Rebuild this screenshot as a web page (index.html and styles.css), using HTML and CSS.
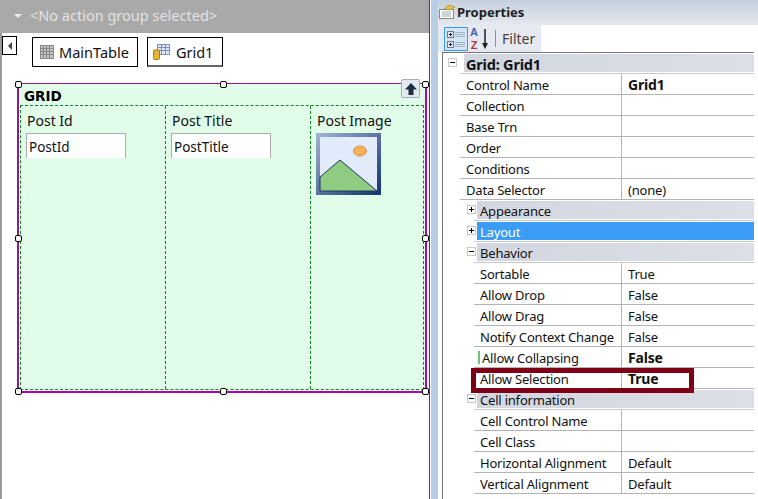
FILE: index.html
```html
<!DOCTYPE html>
<html lang="en">
<head>
    <meta charset="UTF-8">
    <title>Grid1 Properties</title>
    <link rel="stylesheet" href="styles.css">
</head>
<body>
    <!-- Designer -->
    <div class="designer">
        <div class="action-bar"><span class="caret"></span>&lt;No action group selected&gt;</div>
        <div class="crumbs">
            <div class="collapse-btn"><span class="collapse-arrow"></span></div>
            <div class="crumb">
                <svg class="crumb-icon" width="14" height="14" viewBox="0 0 14 14">
                    <rect x="0.5" y="0.5" width="13" height="13" fill="#c4c4c4" stroke="#888"/>
                    <path d="M3.500 0v14M6.500 0v14M9.500 0v14M0 3.500h14M0 6.500h14M0 9.500h14" stroke="#888" fill="none"/>
                </svg>
                MainTable
            </div>
            <div class="crumb crumb-active">
                <svg class="crumb-icon" width="17" height="16" viewBox="0 0 17 16">
                    <rect x="4.500" y="0.500" width="12" height="10" fill="#dfe6f5" stroke="#7f8fb5"/>
                    <path d="M4.500 3.500h12M4.500 6.500h12M8.500 0v10M12.500 0v10" stroke="#7f8fb5" fill="none"/>
                    <rect x="0.500" y="6" width="6" height="9.500" rx="1" fill="#e3b52f" stroke="#a9801a"/>
                </svg>
                Grid1
            </div>
        </div>

        <div class="grid-box">
            <span class="handle h-tl"></span><span class="handle h-tc"></span><span class="handle h-tr"></span>
            <span class="handle h-ml"></span><span class="handle h-mr"></span>
            <span class="handle h-bl"></span><span class="handle h-bc"></span><span class="handle h-br"></span>
            <div class="up-btn">
                <svg width="14" height="14" viewBox="0 0 14 14"><path d="M7 1l6 6.500H9.500V13h-5V7.500H1z" fill="#1d2f45"/></svg>
            </div>
            <div class="grid-title">GRID</div>
            <div class="grid-cols">
                <div class="grid-col col-id">
                    <div class="col-label">Post Id</div>
                    <div class="col-input">PostId</div>
                </div>
                <div class="grid-col col-title">
                    <div class="col-label">Post Title</div>
                    <div class="col-input">PostTitle</div>
                </div>
                <div class="grid-col col-image">
                    <div class="col-label">Post Image</div>
                    <svg class="image-icon" width="65" height="62" viewBox="0 0 65 62">
                        <defs>
                            <linearGradient id="frame" x1="0" y1="0" x2="1" y2="1">
                                <stop offset="0" stop-color="#a5b4d0"/>
                                <stop offset="1" stop-color="#12326f"/>
                            </linearGradient>
                        </defs>
                        <rect width="65" height="62" fill="url(#frame)"/>
                        <rect x="4" y="4" width="57" height="54" fill="#e2ebfb"/>
                        <path d="M4 44L24 27 61 58H4z" fill="#90cb82" stroke="#1c3562" stroke-width="1"/>
                        <ellipse cx="44" cy="18" rx="6.500" ry="5" fill="#f6b05e" stroke="#e58a3a"/>
                    </svg>
                </div>
            </div>
        </div>
    </div>

    <div class="splitter"></div>

    <!-- Properties -->
    <div class="properties">
        <div class="props-title">
            <svg width="18" height="16" viewBox="0 0 18 16">
                <rect x="1.500" y="5.500" width="14" height="9" fill="#fff" stroke="#8a8a8a"/>
                <path d="M4 8h9M4 10h9M4 12h9" stroke="#9aa"/>
                <path d="M6 5l5-4 6 2-5 3z" fill="#e6c24a" stroke="#98842d" stroke-width="0.600"/>
            </svg>
            Properties
        </div>
        <div class="props-toolbar">
            <div class="tool tool-on">
                <svg width="22" height="22" viewBox="0 0 22 22">
                    <rect x="2.500" y="3.500" width="6" height="6" fill="#dfe6ef" stroke="#778"/>
                    <rect x="2.500" y="13.500" width="6" height="6" fill="#dfe6ef" stroke="#778"/>
                    <path d="M4 6.500h3M5.500 5v3M4 16.500h3M5.500 15v3" stroke="#123"/>
                    <path d="M10 4.500h10M10 6.500h10M10 8.500h10M10 14.500h10M10 16.500h10M10 18.500h10" stroke="#a9b2bf"/>
                </svg>
            </div>
            <div class="tool-az">
                <span class="az-a">A</span>
                <span class="az-z">Z</span>
            </div>
            <svg class="sort-arrow" width="8" height="22" viewBox="0 0 8 22">
                <path d="M4 1v17" stroke="#222" stroke-width="1.500"/>
                <path d="M1 15l3 6 3-6z" fill="#222"/>
            </svg>
            <div class="tool-sep"></div>
            <div class="tool-filter">Filter</div>
        </div>
        <div class="props-body">
            <div class="group group-top"><span class="tree-box tree-minus"></span><div class="group-head group-bold">Grid: Grid1</div></div>
            <div class="row row-top"><div class="name">Control Name</div><div class="value strong">Grid1</div></div>
            <div class="row row-top"><div class="name">Collection</div><div class="value"></div></div>
            <div class="row row-top"><div class="name">Base Trn</div><div class="value"></div></div>
            <div class="row row-top"><div class="name">Order</div><div class="value"></div></div>
            <div class="row row-top"><div class="name">Conditions</div><div class="value"></div></div>
            <div class="row row-top"><div class="name">Data Selector</div><div class="value">(none)</div></div>
            <div class="group"><span class="tree-box tree-plus"></span><div class="group-head">Appearance</div></div>
            <div class="group"><span class="tree-box tree-plus"></span><div class="group-head group-selected">Layout</div></div>
            <div class="group"><span class="tree-box tree-minus"></span><div class="group-head">Behavior</div></div>
            <div class="row"><div class="name">Sortable</div><div class="value">True</div></div>
            <div class="row"><div class="name">Allow Drop</div><div class="value">False</div></div>
            <div class="row"><div class="name">Allow Drag</div><div class="value">False</div></div>
            <div class="row"><div class="name">Notify Context Change</div><div class="value">False</div></div>
            <div class="row"><div class="name name-changed">Allow Collapsing</div><div class="value strong">False</div></div>
            <div class="row"><div class="name">Allow Selection</div><div class="value strong">True</div></div>
            <div class="group"><span class="tree-box tree-minus"></span><div class="group-head">Cell information</div></div>
            <div class="row"><div class="name">Cell Control Name</div><div class="value"></div></div>
            <div class="row"><div class="name">Cell Class</div><div class="value"></div></div>
            <div class="row"><div class="name">Horizontal Alignment</div><div class="value">Default</div></div>
            <div class="row"><div class="name">Vertical Alignment</div><div class="value">Default</div></div>
            <div class="callout"></div>
        </div>
    </div>
</body>
</html>
```

FILE: styles.css
```css
body {
    margin: 0;
    width: 758px;
    height: 499px;
    overflow: hidden;
    display: flex;
    background: #fff;
    color: #111;
    font-family: 'Noto Sans', 'Open Sans', sans-serif;
    font-size: 13px;
    letter-spacing: -0.2px;
}

/* Designer */
.designer {
    width: 429px;
    flex: none;
    box-sizing: border-box;
    border-left: 2px solid #999;
    background: #fff;
    letter-spacing: 0;
    font-size: 14px;
}

.action-bar {
    height: 33px;
    margin-left: -2px;
    padding: 0 0 3px 14px;
    box-sizing: border-box;
    display: flex;
    align-items: center;
    background: #a9a9a9;
    color: #e2e2e2;
    font-size: 14.5px;
}

.caret {
    width: 0;
    height: 0;
    margin: 2px 8px 0 0;
    border: 4px solid transparent;
    border-top: 4px solid #eee;
    border-bottom: 0;
}

.crumbs {
    height: 39px;
    padding-top: 3px;
    box-sizing: border-box;
    display: flex;
    align-items: flex-start;
}

.collapse-btn {
    width: 13px;
    height: 17px;
    margin-right: 15px;
    border: 1px solid #000;
    display: flex;
    align-items: center;
    justify-content: center;
}

.collapse-arrow {
    width: 0;
    height: 0;
    border: 4px solid transparent;
    border-right: 4px solid #444;
    border-left: 0;
}

.crumb {
    height: 30px;
    margin: 1px 9px 0 0;
    padding: 0 8px 0 7px;
    box-sizing: border-box;
    display: flex;
    align-items: center;
    gap: 5px;
    border: 1px solid #000;
    background: #fff;
    font-size: 14.5px;
}

.crumb-active {
    border-bottom: 2px solid #666;
    padding: 0 9px 0 5px;
    gap: 6px;
}

.grid-box {
    position: relative;
    width: 410px;
    height: 310px;
    margin: 11px 0 0 15px;
    box-sizing: border-box;
    border-style: solid;
    border-width: 1px 2px 2px 2px;
    border-color: #8d1a8d #b000b0 #b000b0 #8d1a8d;
    background: #e1fde9;
}

.handle {
    position: absolute;
    width: 5px;
    height: 5px;
    border: 1px solid #000;
    border-radius: 2px;
    background: #fff;
    z-index: 1;
}

.h-tl { left: -4px; top: -3px; }
.h-tc { left: 201px; top: -3px; }
.h-tr { left: 403px; top: -3px; }
.h-ml { left: -4px; top: 151px; }
.h-mr { left: 403px; top: 151px; }
.h-bl { left: -4px; top: 304px; }
.h-bc { left: 201px; top: 304px; }
.h-br { left: 403px; top: 304px; }

.up-btn {
    position: absolute;
    right: 5px;
    top: -5px;
    width: 17px;
    height: 17px;
    display: flex;
    align-items: center;
    justify-content: center;
    border: 1px solid #9fb0c6;
    border-radius: 2px;
    background: #e4e9f0;
}

.grid-title {
    height: 21px;
    padding-left: 5px;
    box-sizing: border-box;
    font-family: 'DejaVu Sans', sans-serif;
    font-size: 13.5px;
    font-weight: bold;
    line-height: 24px;
    color: #000;
}

.grid-cols {
    display: flex;
    height: 285px;
    margin: 0 1px;
    box-sizing: border-box;
    border: 1px dashed #0a8a1a;
}

.grid-col {
    box-sizing: border-box;
    padding: 4px 0 0 6px;
    border-right: 1px dashed #0a8a1a;
}

.col-id, .col-title {
    width: 145px;
}

.col-image {
    flex: 1;
    border-right: 0;
}

.col-label {
    height: 23px;
    line-height: 21px;
}

.col-input {
    width: 100px;
    height: 25px;
    margin-left: -1px;
    box-sizing: border-box;
    padding-left: 2px;
    border: 1px solid #aaa;
    border-bottom: 0;
    background: #fff;
    font-size: 13.5px;
    line-height: 26px;
}

.image-icon {
    display: block;
    margin-left: -1px;
}

.splitter {
    width: 9px;
    flex: none;
    box-sizing: border-box;
    border-left: 1px solid #444;
    background: linear-gradient(#fff, #fff) no-repeat 0 0 / 1px 100%, #b8cde6;
}

/* Properties */
.properties {
    position: relative;
    flex: 1;
    min-width: 0;
    background: #fff;
}

.props-title {
    height: 25px;
    display: flex;
    align-items: center;
    gap: 1px;
    padding-bottom: 1px;
    box-sizing: border-box;
    background: linear-gradient(#c5cfdd, #e4e8ef);
    font-size: 13px;
    font-weight: bold;
    letter-spacing: 0;
    color: #222;
}

.props-toolbar {
    width: 103px;
    height: 27px;
    display: flex;
    align-items: center;
    padding-left: 6px;
    box-sizing: border-box;
    background: #e6e8f2;
}

.tool {
    height: 24px;
    display: flex;
    align-items: center;
}

.tool-on {
    width: 24px;
    justify-content: center;
    box-sizing: border-box;
    border: 1px solid #3f9bea;
    background: #d3e5f8;
}

.tool-az {
    width: 10px;
    margin-left: 1px;
    display: flex;
    flex-direction: column;
    align-items: center;
    font-family: 'Liberation Sans', sans-serif;
    font-size: 11px;
    font-weight: bold;
    line-height: 13px;
    letter-spacing: 0;
}

.az-a { color: #3b66b5; }
.az-z { color: #b0383c; }

.sort-arrow {
    margin-left: 2px;
}

.tool-sep {
    width: 1px;
    height: 17px;
    margin: 0 6px;
    background: #8a8f9a;
}

.tool-filter {
    font-size: 14px;
    letter-spacing: 0;
    color: #4a4038;
}

.props-body {
    position: relative;
    margin: 0 4px;
    border-top: 1px solid #777;
    border-left: 1px solid #777;
    height: 447px;
    box-sizing: border-box;
}

.group {
    height: 21px;
    padding-top: 1px;
    padding-left: 34px;
    box-sizing: border-box;
    display: flex;
    position: relative;
    background: linear-gradient(#c9c9c9, #c9c9c9) no-repeat 31px 100% / 100% 1px;
}

.group-top {
    padding-left: 21px;
    background-position: 17px 100%;
}

.tree-box {
    position: absolute;
    left: 24px;
    top: 5px;
    width: 7px;
    height: 7px;
    border: 1px solid #c8c8c8;
    background: linear-gradient(#000, #000) no-repeat center / 5px 1px;
}

.tree-plus {
    background:
        linear-gradient(#000, #000) no-repeat center / 5px 1px,
        linear-gradient(#000, #000) no-repeat center / 1px 5px;
}

.group-top .tree-box {
    left: 5px;
}

.group-head {
    flex: 1;
    height: 18px;
    padding-left: 3px;
    background: linear-gradient(to right, #d2d6e0, #dcdfe7);
    line-height: 20px;
}

.group-bold {
    padding-left: 2px;
    font-size: 14.5px;
    font-weight: bold;
    letter-spacing: -0.2px;
}

.group-selected {
    background: #3a9cf5;
    color: #fff;
}

.row {
    height: 21px;
    margin-left: 31px;
    display: flex;
    box-sizing: border-box;
    border-bottom: 1px solid #b4b4b4;
    line-height: 22px;
}

.row-top {
    margin-left: 17px;
}

.name {
    flex: 1;
    min-width: 0;
    padding-left: 6px;
    box-sizing: border-box;
    border-right: 1px solid #b4b4b4;
    white-space: nowrap;
}

.name-changed {
    padding-left: 8px;
    background: linear-gradient(#6cc56c, #6cc56c) no-repeat 4px 4px / 2px 13px;
}

.value {
    width: 132px;
    flex: none;
    padding-left: 6px;
    box-sizing: border-box;
}

.strong {
    font-size: 14px;
    font-weight: bold;
}

.callout {
    position: absolute;
    left: 28px;
    top: 315px;
    width: 223px;
    height: 25px;
    box-sizing: border-box;
    border: 5px solid #7e0016;
}
```
